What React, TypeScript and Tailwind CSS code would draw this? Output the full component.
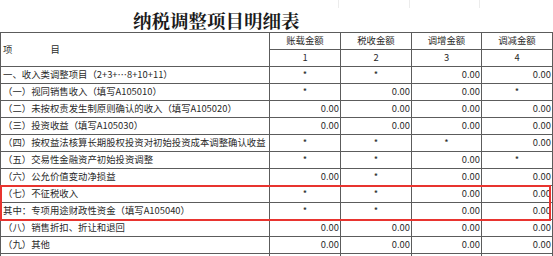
import React from "react";

type Cell = string;
const rows: [string, Cell, Cell, Cell, Cell][] = [
  ["一、收入类调整项目（2+3+…8+10+11）", "*", "*", "0.00", "0.00"],
  ["（一）视同销售收入（填写A105010）", "*", "0.00", "0.00", "*"],
  ["（二）未按权责发生制原则确认的收入（填写A105020）", "0.00", "0.00", "0.00", "0.00"],
  ["（三）投资收益（填写A105030）", "0.00", "0.00", "0.00", "0.00"],
  ["（四）按权益法核算长期股权投资对初始投资成本调整确认收益", "*", "*", "*", "0.00"],
  ["（五）交易性金融资产初始投资调整", "*", "*", "0.00", "*"],
  ["（六）公允价值变动净损益", "0.00", "*", "0.00", "0.00"],
  ["（七）不征税收入", "*", "*", "0.00", "0.00"],
  ["其中：专项用途财政性资金（填写A105040）", "*", "*", "0.00", "0.00"],
  ["（八）销售折扣、折让和退回", "0.00", "0.00", "0.00", "0.00"],
  ["（九）其他", "0.00", "0.00", "0.00", "0.00"],
  ["", "", "", "", ""],
];

const font = { fontFamily: '"Noto Sans CJK SC", "Noto Sans", sans-serif' };

function NumCell({ v }: { v: string }) {
  const star = v === "*";
  return (
    <td
      className={`border border-[#5c5c5c] h-[17px] p-0 leading-none ${
        star ? "text-center" : "text-right pr-[1px]"
      }`}
    >
      {v}
    </td>
  );
}

export default function App() {
  return (
    <div className="w-[553px] h-[256px] overflow-hidden bg-white text-[#2a2a2a]" style={font}>
      <div className="h-[8px] grid grid-cols-[339px_71px_70px_71px]">
        <div className="border-r border-[#ececec]" />
        <div className="border-r border-[#ececec]" />
        <div className="border-r border-[#ececec]" />
        <div />
      </div>
      <div
        className="h-[24px] pl-[133px] text-[18.5px] font-bold leading-[24px] text-[#1a1a1a] tracking-[0px]"
        style={{ fontFamily: '"Noto Serif CJK SC", "Noto Sans CJK SC", serif' }}
      >
        纳税调整项目明细表
      </div>
      <div className="relative">
        <table className="table-fixed border-collapse w-[552px] text-[9.4px] border border-[#5c5c5c]">
          <colgroup>
            <col className="w-[269px]" />
            <col className="w-[71px]" />
            <col className="w-[71px]" />
            <col className="w-[70px]" />
            <col className="w-[71px]" />
          </colgroup>
          <tbody>
            <tr>
              <td rowSpan={2} className="border border-[#5c5c5c] p-0 pl-[2px] leading-none">
                项<span className="inline-block w-[38px]" />目
              </td>
              <td className="border border-[#5c5c5c] h-[17px] p-0 text-center leading-none">账载金额</td>
              <td className="border border-[#5c5c5c] h-[17px] p-0 text-center leading-none">税收金额</td>
              <td className="border border-[#5c5c5c] h-[17px] p-0 text-center leading-none">调增金额</td>
              <td className="border border-[#5c5c5c] h-[17px] p-0 text-center leading-none">调减金额</td>
            </tr>
            <tr>
              <td className="border border-[#5c5c5c] h-[17px] p-0 text-center leading-none">1</td>
              <td className="border border-[#5c5c5c] h-[17px] p-0 text-center leading-none">2</td>
              <td className="border border-[#5c5c5c] h-[17px] p-0 text-center leading-none">3</td>
              <td className="border border-[#5c5c5c] h-[17px] p-0 text-center leading-none">4</td>
            </tr>
            {rows.map((r, i) => (
              <tr key={i}>
                <td className="border border-[#5c5c5c] h-[17px] p-0 pl-[2px] leading-none whitespace-nowrap overflow-hidden">
                  {r[0]}
                </td>
                <NumCell v={r[1]} />
                <NumCell v={r[2]} />
                <NumCell v={r[3]} />
                <NumCell v={r[4]} />
              </tr>
            ))}
          </tbody>
        </table>
        <div className="absolute left-0 top-[153px] w-[551px] h-[36px] border-2 border-[#e8342f] pointer-events-none" />
      </div>
    </div>
  );
}
